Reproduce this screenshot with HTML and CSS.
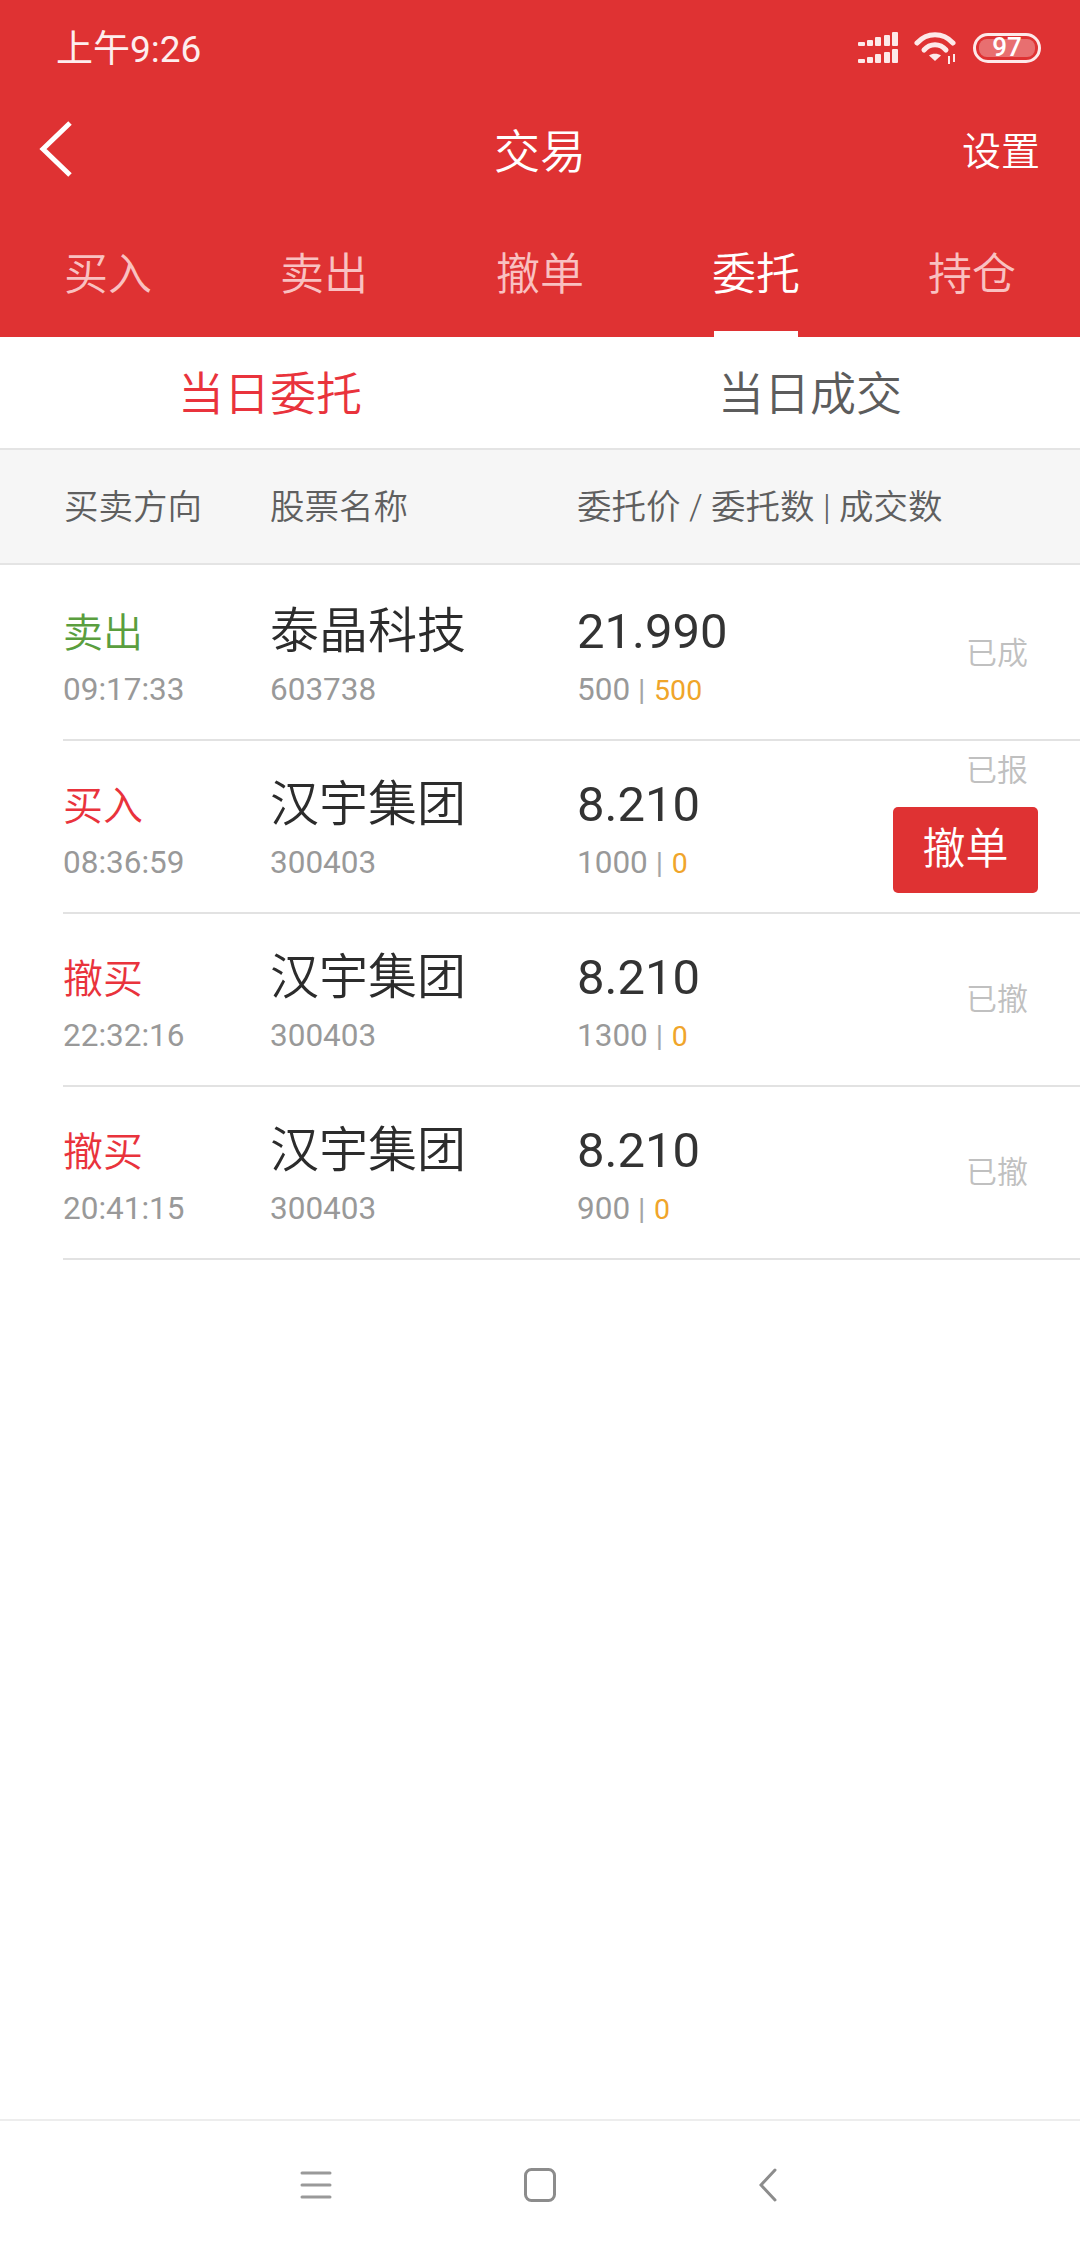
FILE: index.html
```html
<!DOCTYPE html>
<html lang="zh-CN">
<head>
<meta charset="utf-8">
<title>交易</title>
<link rel="stylesheet" href="styles.css">
</head>
<body>
<div class="app">
  <header class="head">
    <div class="status">
      <span class="clock">上午9:26</span>
      <div class="status-icons">
        <svg class="signal" width="41" height="32" viewBox="0 0 41 32" fill="#fde9e9">
          <rect x="0" y="10" width="7" height="4" rx="1"/><rect x="9" y="8" width="6" height="6" rx="1"/><rect x="17" y="5" width="6" height="9" rx="1"/><rect x="26" y="3" width="6" height="11" rx="1"/><rect x="34" y="0" width="6" height="14" rx="1"/>
          <rect x="0" y="27" width="7" height="4" rx="1"/><rect x="9" y="25" width="6" height="6" rx="1"/><rect x="17" y="22" width="6" height="9" rx="1"/><rect x="26" y="20" width="6" height="11" rx="1"/><rect x="34" y="17" width="6" height="14" rx="1"/>
        </svg>
        <svg class="wifi" width="44" height="32" viewBox="0 0 44 32" fill="none" stroke="#fde9e9" stroke-width="5" stroke-linecap="round">
          <path d="M3 11C13 0 29 0 39 11"/>
          <path d="M10 18C16 11 26 11 32 18"/>
          <path d="M21 29L15 23.500C18 21 24 21 27 23.500Z" fill="#fde9e9" stroke="none"/>
          <path d="M35 24V32M40 22V30" stroke-width="2" stroke-linecap="butt"/>
        </svg>
        <div class="battery"><span class="battery-num">97</span></div>
      </div>
    </div>
    <div class="nav">
      <svg class="back" width="34" height="56" viewBox="0 0 34 56" fill="none" stroke="#fff" stroke-width="5">
        <path d="M31 2L4 28L31 54"/>
      </svg>
      <span class="title">交易</span>
      <span class="setting">设置</span>
    </div>
    <nav class="tabs">
      <div class="tab">买入</div>
      <div class="tab">卖出</div>
      <div class="tab">撤单</div>
      <div class="tab tab-on">委托</div>
      <div class="tab">持仓</div>
    </nav>
  </header>

  <div class="subtabs">
    <div class="subtab subtab-on">当日委托</div>
    <div class="subtab">当日成交</div>
  </div>

  <div class="thead">
    <span>买卖方向</span>
    <span>股票名称</span>
    <span>委托价 / 委托数 | 成交数</span>
  </div>

  <main class="list">
    <div class="row">
      <div class="cell"><div class="dir green">卖出</div><div class="sub">09:17:33</div></div>
      <div class="cell"><div class="name">泰晶科技</div><div class="sub">603738</div></div>
      <div class="cell"><div class="price">21.990</div><div class="sub">500 <i class="bar">|</i> <b class="fill">500</b></div></div>
      <div class="state state-solo"><span class="state-text">已成</span></div>
    </div>
    <div class="row">
      <div class="cell"><div class="dir red">买入</div><div class="sub">08:36:59</div></div>
      <div class="cell"><div class="name">汉宇集团</div><div class="sub">300403</div></div>
      <div class="cell"><div class="price">8.210</div><div class="sub">1000 <i class="bar">|</i> <b class="fill">0</b></div></div>
      <div class="state"><span class="state-text">已报</span><span class="cancel">撤单</span></div>
    </div>
    <div class="row">
      <div class="cell"><div class="dir red">撤买</div><div class="sub">22:32:16</div></div>
      <div class="cell"><div class="name">汉宇集团</div><div class="sub">300403</div></div>
      <div class="cell"><div class="price">8.210</div><div class="sub">1300 <i class="bar">|</i> <b class="fill">0</b></div></div>
      <div class="state state-solo"><span class="state-text">已撤</span></div>
    </div>
    <div class="row">
      <div class="cell"><div class="dir red">撤买</div><div class="sub">20:41:15</div></div>
      <div class="cell"><div class="name">汉宇集团</div><div class="sub">300403</div></div>
      <div class="cell"><div class="price">8.210</div><div class="sub">900 <i class="bar">|</i> <b class="fill">0</b></div></div>
      <div class="state state-solo"><span class="state-text">已撤</span></div>
    </div>
  </main>

  <footer class="sysnav">
    <svg width="32" height="30" viewBox="0 0 32 30" fill="none" stroke="#999" stroke-width="3" stroke-linecap="round"><path d="M2 3H30M2 15H30M2 27H30"/></svg>
    <svg width="32" height="34" viewBox="0 0 32 34" fill="none" stroke="#8c8c8c" stroke-width="3"><rect x="1.500" y="1.500" width="29" height="31" rx="6"/></svg>
    <svg width="18" height="34" viewBox="0 0 18 34" fill="none" stroke="#8c8c8c" stroke-width="3" stroke-linecap="round"><path d="M16 2L2 17L16 32"/></svg>
  </footer>
</div>
</body>
</html>
```

FILE: styles.css
```css
* { box-sizing: border-box; }
html, body { margin: 0; padding: 0; }
body {
  width: 1080px;
  height: 2248px;
  background: #fff;
  font-family: Roboto, "Noto Sans CJK SC", sans-serif;
  overflow: hidden;
}
.app { display: flex; flex-direction: column; height: 2248px; }

.head { background: #df3233; color: #fff; height: 337px; flex: none; display: flex; flex-direction: column; }
.status { height: 100px; display: flex; align-items: center; justify-content: space-between; padding: 0 39px 0 56px; }
.clock { font-size: 37px; line-height: 50px; color: #fdeeee; font-weight: 400; }
.status-icons { display: flex; align-items: center; gap: 15px; margin-top: -5px; margin-left: 1px; }
.battery {
  width: 68px; height: 30px; border: 3.5px solid #fde9e9; border-radius: 15px;
  padding: 3px; display: flex;
}
.battery-num {
  flex: 1; background: rgba(255,255,255,.3); border-radius: 8px;
  font-size: 26px; line-height: 17px; font-weight: 500; text-align: center; color: #fff;
}

.nav { height: 104px; display: flex; align-items: center; justify-content: space-between; padding: 0 40px; position: relative; }
.back { margin-top: -7px; margin-left: -1px; }
.title { position: absolute; left: 0; right: 0; text-align: center; font-size: 46px; line-height: 60px; font-weight: 350; }
.setting { font-size: 39px; line-height: 52px; font-weight: 350; }

.tabs { flex: 1; display: grid; grid-template-columns: repeat(5, 216px); }
.tab { font-size: 44px; line-height: 60px; text-align: center; color: #f9c1c1; padding-top: 41px; position: relative; font-weight: 350; }
.tab-on { color: #fff; }
.tab-on::after { content: ""; position: absolute; left: 66px; width: 84px; bottom: 0; height: 6px; background: #fff; }

.subtabs { height: 113px; flex: none; display: grid; grid-template-columns: 1fr 1fr; border-bottom: 2px solid #e4e4e4; }
.subtab { font-size: 46px; line-height: 114px; text-align: center; color: #5c5c5c; font-weight: 350; }
.subtab-on { color: #e9333c; }

.thead {
  height: 115px; flex: none; display: grid; grid-template-columns: 206px 307px 1fr;
  align-items: center; padding: 0 0 5px 64px;
  background: #f6f6f6; border-bottom: 2px solid #e4e4e4;
  font-size: 34.500px; color: #5f5f5f; font-weight: 350;
}

.list { flex: 1; padding-top: 3px; }
.row {
  height: 173px; margin-left: 63px;
  display: grid; grid-template-columns: 207px 307px 1fr auto;
  border-bottom: 2px solid #e2e2e2;
}
.cell { padding-top: 31px; }
.dir { font-size: 40px; line-height: 64px; height: 69px; padding-top: 3px; font-weight: 350; }
.green { color: #5a9e3e; }
.red { color: #e9333c; }
.name { font-size: 49px; line-height: 66px; height: 69px; color: #2c2c2c; font-weight: 350; }
.price { font-size: 49px; line-height: 66px; height: 69px; color: #333; font-weight: 400; }
.sub { font-size: 31.500px; line-height: 44px; color: #999; font-weight: 400; }
.bar { font-style: normal; font-size: 30px; color: #a5a5a5; margin-right: 1px; }
.fill { font-weight: 400; font-size: 28.500px; color: #f0a52a; }

.state { display: flex; flex-direction: column; align-items: flex-end; justify-content: center; padding-right: 42px; gap: 16px; padding-bottom: 10px; }
.state-solo { padding-bottom: 0; }
.state-text { font-size: 31px; line-height: 40px; color: #c0c0c0; margin-right: 10px; font-weight: 350; }
.cancel {
  width: 145px; height: 86px; background: #df3233; color: #fff; border-radius: 5px;
  font-size: 43px; line-height: 84px; text-align: center; font-weight: 350;
}

.sysnav {
  height: 129px; flex: none; border-top: 2px solid #ededed;
  display: grid; grid-template-columns: 224px 235px 1fr; align-items: center; padding-left: 300px;
}
```
